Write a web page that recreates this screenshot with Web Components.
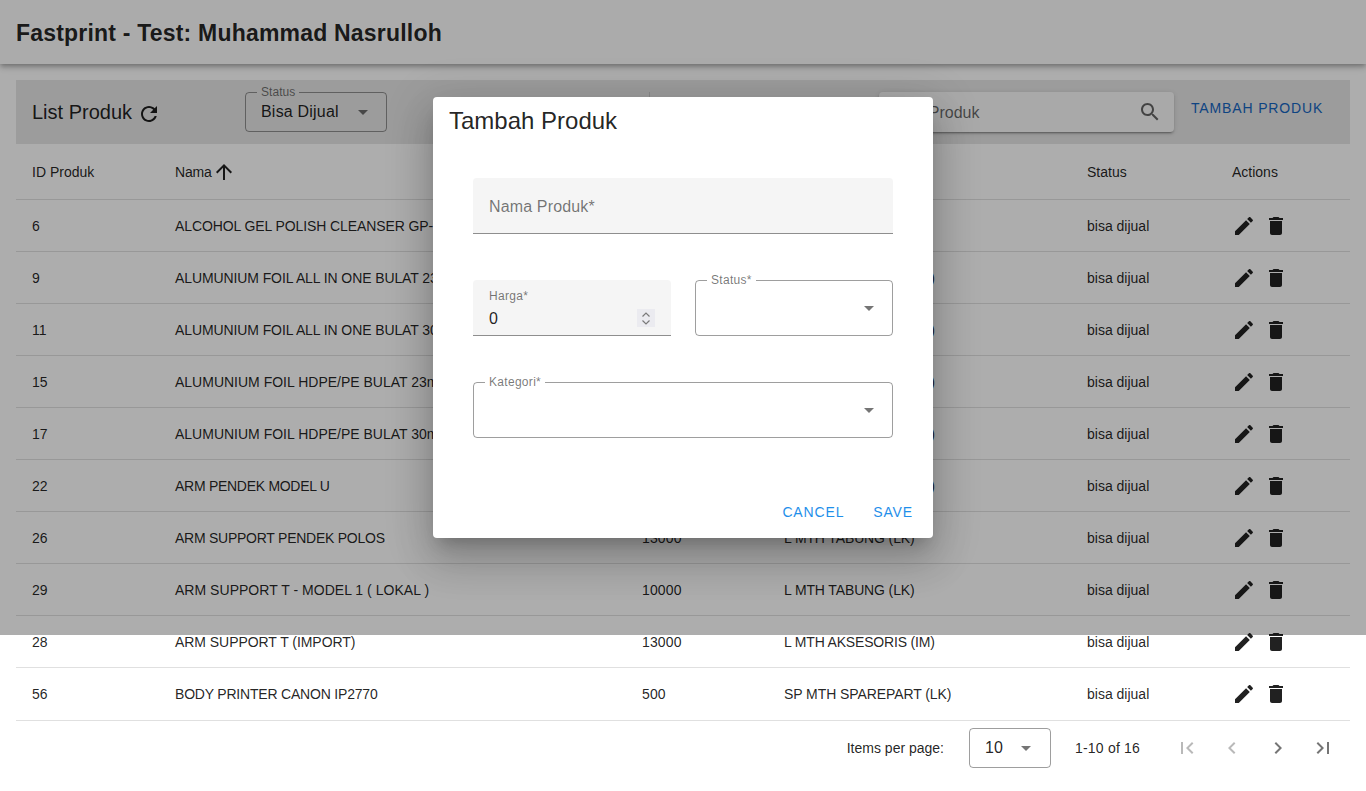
<!DOCTYPE html>
<html lang="id"><head><meta charset="utf-8"><title>Fastprint</title>
<style>
html,body{margin:0;height:791px;overflow:hidden;background:#fff;font-family:"Liberation Sans",Arial,sans-serif;color:rgba(0,0,0,.87)}
body{display:flex;flex-direction:column;position:relative}
dialog-layer>*{flex:none}
.row{display:grid;grid-template-columns:1fr 1fr;gap:24px}
</style></head><body>
<app-toolbar>Fastprint - Test: Muhammad Nasrulloh</app-toolbar>
<product-page></product-page>
<dialog-layer>
  <span slot="title">Tambah Produk</span>
  <filled-field label="Nama Produk*"></filled-field>
  <div class="row"><filled-field label="Harga*" value="0" number></filled-field><outline-field label="Status*"></outline-field></div>
  <outline-field label="Kategori*"></outline-field>
</dialog-layer>
<script>
const P={refresh:"M17.65 6.35C16.2 4.9 14.21 4 12 4c-4.42 0-7.99 3.58-7.99 8s3.57 8 7.99 8c3.73 0 6.84-2.55 7.73-6h-2.08c-.82 2.33-3.04 4-5.65 4-3.31 0-6-2.69-6-6s2.69-6 6-6c1.66 0 3.14.69 4.22 1.78L13 11h7V4l-2.35 2.35z",
up:"M4 12l1.41 1.41L11 7.83V20h2V7.83l5.58 5.59L20 12l-8-8-8 8z",
edit:"M3 17.25V21h3.75L17.81 9.94l-3.75-3.75L3 17.25zM20.71 7.04c.39-.39.39-1.02 0-1.41l-2.34-2.34c-.39-.39-1.02-.39-1.41 0l-1.83 1.83 3.75 3.75 1.83-1.83z",
del:"M6 19c0 1.1.9 2 2 2h8c1.1 0 2-.9 2-2V7H6v12zM19 4h-3.5l-1-1h-5l-1 1H5v2h14V4z",
search:"M15.5 14h-.79l-.28-.27C15.41 12.59 16 11.11 16 9.5 16 5.91 13.09 3 9.5 3S3 5.91 3 9.5 5.91 16 9.5 16c1.61 0 3.09-.59 4.23-1.57l.27.28v.79l5 4.99L20.49 19l-4.99-5zm-6 0C7.01 14 5 11.99 5 9.5S7.01 5 9.5 5 14 7.01 14 9.5 11.99 14 9.5 14z",
first:"M18.41 16.59L13.82 12l4.59-4.59L17 6l-6 6 6 6zM6 6h2v12H6z",
prev:"M15.41 7.41L14 6l-6 6 6 6 1.41-1.41L10.83 12z",
next:"M10 6L8.59 7.41 13.17 12l-4.58 4.59L10 18l6-6z",
last:"M5.59 7.41L10.18 12l-4.59 4.59L7 18l6-6-6-6zM16 6h2v12h-2z"};
const ic=(n,s=24,o=1)=>`<svg width="${s}" height="${s}" viewBox="0 0 24 24" fill="currentColor" style="display:block;flex:none;opacity:${o}"><path d="${P[n]}"/></svg>`;
class Base extends HTMLElement{render(h){this.attachShadow({mode:"open"}).innerHTML=h}}

customElements.define("app-toolbar",class extends Base{connectedCallback(){this.render(`<style>
:host{display:flex;align-items:center;flex:none;box-sizing:border-box;height:64px;padding:1px 16px 0;background:#fdfdfd;font:700 23px/32px "Liberation Sans",Arial,sans-serif;letter-spacing:.2px;box-shadow:0 2px 4px -1px rgba(0,0,0,.2),0 4px 5px rgba(0,0,0,.14),0 1px 10px rgba(0,0,0,.12);position:relative;z-index:1}
</style><slot></slot>`)}});

customElements.define("outline-field",class extends Base{connectedCallback(){const l=this.getAttribute("label"),v=this.getAttribute("value")||"";this.render(`<style>
:host{display:block;box-sizing:border-box;height:56px;min-width:0;border:1px solid rgba(0,0,0,.38);border-radius:4px;position:relative;font-size:16px}
label{position:absolute;left:11px;top:-8px;padding:0 4px;font-size:12px;line-height:14px;letter-spacing:var(--label-ls,.3px);color:rgba(0,0,0,.54);background:var(--notch,#fff);white-space:nowrap}
.val{position:absolute;left:15px;top:50%;transform:translateY(-50%);line-height:20px;white-space:nowrap;letter-spacing:.2px}
i{position:absolute;right:var(--arrow,18px);top:50%;margin-top:-2.5px;width:0;height:0;border:5px solid transparent;border-top-color:rgba(0,0,0,.54);border-bottom:0}
</style>${l?`<label>${l}</label>`:""}<span class="val">${v}</span><i></i>`)}});

customElements.define("filled-field",class extends Base{connectedCallback(){const l=this.getAttribute("label"),v=this.getAttribute("value"),n=this.hasAttribute("number");this.render(`<style>
:host{display:block;box-sizing:border-box;height:56px;min-width:0;background:#f5f5f5;border-radius:4px 4px 0 0;border-bottom:1px solid rgba(0,0,0,.42);position:relative;font-size:16px}
.big{position:absolute;left:16px;top:19px;line-height:20px;letter-spacing:.15px;color:rgba(0,0,0,.54)}
.small{position:absolute;left:16px;top:9px;font-size:12px;line-height:14px;letter-spacing:.3px;color:rgba(0,0,0,.54)}
.val{position:absolute;left:16px;top:29px;line-height:20px}
.spin{position:absolute;right:16px;top:29px;width:18px;height:18px;background:#ebebf0;display:flex;align-items:center;justify-content:center}
</style>${v!==null?`<span class="small">${l}</span><span class="val">${v}</span>`:`<span class="big">${l}</span>`}${n?`<span class="spin"><svg width="12" height="17" viewBox="0 0 12 17" fill="none" stroke="#7a7a7a" stroke-width="1.2"><path d="M2.5 6.5L6 3l3.5 3.5M2.5 10.5L6 14l3.5-3.5"/></svg></span>`:""}`)}});

customElements.define("text-button",class extends Base{connectedCallback(){this.render(`<style>
:host{display:inline-flex;align-items:center;font:400 14px/20px "Liberation Sans",Arial,sans-serif;letter-spacing:.85px;color:var(--c,#1f8fea);white-space:nowrap}
</style><slot></slot>`)}});

customElements.define("search-box",class extends Base{connectedCallback(){this.render(`<style>
:host{display:flex;align-items:center;box-sizing:border-box;width:295px;height:40px;padding:0 12px 0 16px;border-radius:4px;background:#fafafa;font-size:16px;color:rgba(0,0,0,.6);justify-content:space-between;box-shadow:0 3px 1px -2px rgba(0,0,0,.2),0 2px 2px rgba(0,0,0,.14),0 1px 5px rgba(0,0,0,.12)}
span{position:relative;top:1px}
</style><span>Cari Produk</span>${ic("search")}`)}});

customElements.define("filter-band",class extends Base{connectedCallback(){this.render(`<style>
:host{display:flex;align-items:center;height:64px;background:#e6e6e6;padding:0 26px 0 16px;font-size:20px}
.t{display:flex;align-items:center;gap:5px;width:213px;flex:none}
.t svg{position:relative;top:2px}
outline-field{flex:none;width:142px;height:40px;--notch:#e6e6e6;--label-ls:.05px}
.d{width:1px;height:40px;background:rgba(0,0,0,.12);margin-left:262px;flex:none}
search-box{margin-left:229px;flex:none}
text-button{margin-left:17px;--c:#1565c0;position:relative;top:-4px}
</style><div class="t"><span>List Produk</span>${ic("refresh")}</div><outline-field label="Status" value="Bisa Dijual"></outline-field><div class="d"></div><search-box></search-box><text-button>TAMBAH PRODUK</text-button>`)}});

const rows=[[6,"ALCOHOL GEL POLISH CLEANSER GP-CLN01",12500,"L QUEENLY",-.1],[9,"ALUMUNIUM FOIL ALL IN ONE BULAT 23mm",1000,"L MTH AKSESORIS (IM)",-.1],[11,"ALUMUNIUM FOIL ALL IN ONE BULAT 30mm",1000,"L MTH AKSESORIS (IM)",-.1],[15,"ALUMUNIUM FOIL HDPE/PE BULAT 23mm",12500,"L MTH AKSESORIS (IM)",0],[17,"ALUMUNIUM FOIL HDPE/PE BULAT 30mm",12500,"L MTH AKSESORIS (IM)",0],[22,"ARM PENDEK MODEL U",13000,"L MTH AKSESORIS (IM)",-.28],[26,"ARM SUPPORT PENDEK POLOS",13000,"L MTH TABUNG (LK)",-.25],[29,"ARM SUPPORT T - MODEL 1 ( LOKAL )",10000,"L MTH TABUNG (LK)",.03],[28,"ARM SUPPORT T (IMPORT)",13000,"L MTH AKSESORIS (IM)",-.05],[56,"BODY PRINTER CANON IP2770",500,"SP MTH SPAREPART (LK)",-.2]];
const kls=s=>s.includes("AKSESORIS")?-.18:s.includes("SPARE")?-.08:-.13;
customElements.define("product-table",class extends Base{connectedCallback(){this.render(`<style>
:host{display:block;font-size:14px}
.r{display:grid;grid-template-columns:143px 467px 142px 303px 145px 134px;height:51px;border-bottom:1px solid rgba(0,0,0,.12);align-items:center}
.h{height:55px}
.r:last-child{height:52px}
.r>*{padding-left:16px;white-space:nowrap;overflow:hidden}
.n{display:flex;align-items:center;letter-spacing:-.2px}
.a{display:flex;align-items:center;gap:8px}
.p{letter-spacing:.15px}
</style><div class="r h"><span>ID Produk</span><span class="n">Nama${ic("up")}</span><span>Harga</span><span>Kategori</span><span>Status</span><span>Actions</span></div>${rows.map(r=>`<div class="r"><span>${r[0]}</span><span style="letter-spacing:${r[4]}px">${r[1]}</span><span class="p">${r[2]}</span><span style="letter-spacing:${kls(r[3])}px">${r[3]}</span><span>bisa dijual</span><span class="a">${ic("edit")}${ic("del")}</span></div>`).join("")}`)}});

customElements.define("page-nav",class extends Base{connectedCallback(){this.render(`<style>
:host{display:flex;align-items:center;justify-content:flex-end;height:54px;font-size:14px;color:rgba(0,0,0,.87)}
outline-field{flex:none;width:82px;height:40px;margin-left:25px;--arrow:19px}
.range{margin-left:24px;width:65px;margin-right:35px;white-space:nowrap;letter-spacing:.2px}
.b{display:flex;gap:21.33px;color:rgba(0,0,0,.54);padding-right:15px}
</style><span>Items per page:</span><outline-field value="10" label=""></outline-field><span class="range">1-10 of 16</span><div class="b">${ic("first",24,.5)}${ic("prev",24,.5)}${ic("next")}${ic("last")}</div>`)}});

customElements.define("product-page",class extends Base{connectedCallback(){this.render(`<style>
:host{display:block;padding:16px 16px 0}
</style><filter-band></filter-band><product-table></product-table><page-nav></page-nav>`)}});

customElements.define("dialog-layer",class extends Base{connectedCallback(){this.render(`<style>
:host{position:absolute;left:0;top:0;right:0;height:635px;background:rgba(0,0,0,.32);z-index:5}
.d{position:absolute;left:433px;top:97px;width:500px;height:441px;box-sizing:border-box;background:#fff;border-radius:4px;box-shadow:0 11px 15px -7px rgba(0,0,0,.2),0 24px 38px 3px rgba(0,0,0,.14),0 9px 46px 8px rgba(0,0,0,.12);display:flex;flex-direction:column}
.t{font-size:24px;line-height:32px;padding:8px 16px 0}
.c{padding:41px 40px 0;display:flex;flex-direction:column;gap:46px}
.a{margin-top:auto;display:flex;justify-content:flex-end;gap:29px;padding:0 20px 16px}
</style><div class="d"><div class="t"><slot name="title"></slot></div><div class="c"><slot></slot></div><div class="a"><text-button>CANCEL</text-button><text-button>SAVE</text-button></div></div>`)}});
</script>
</body></html>
